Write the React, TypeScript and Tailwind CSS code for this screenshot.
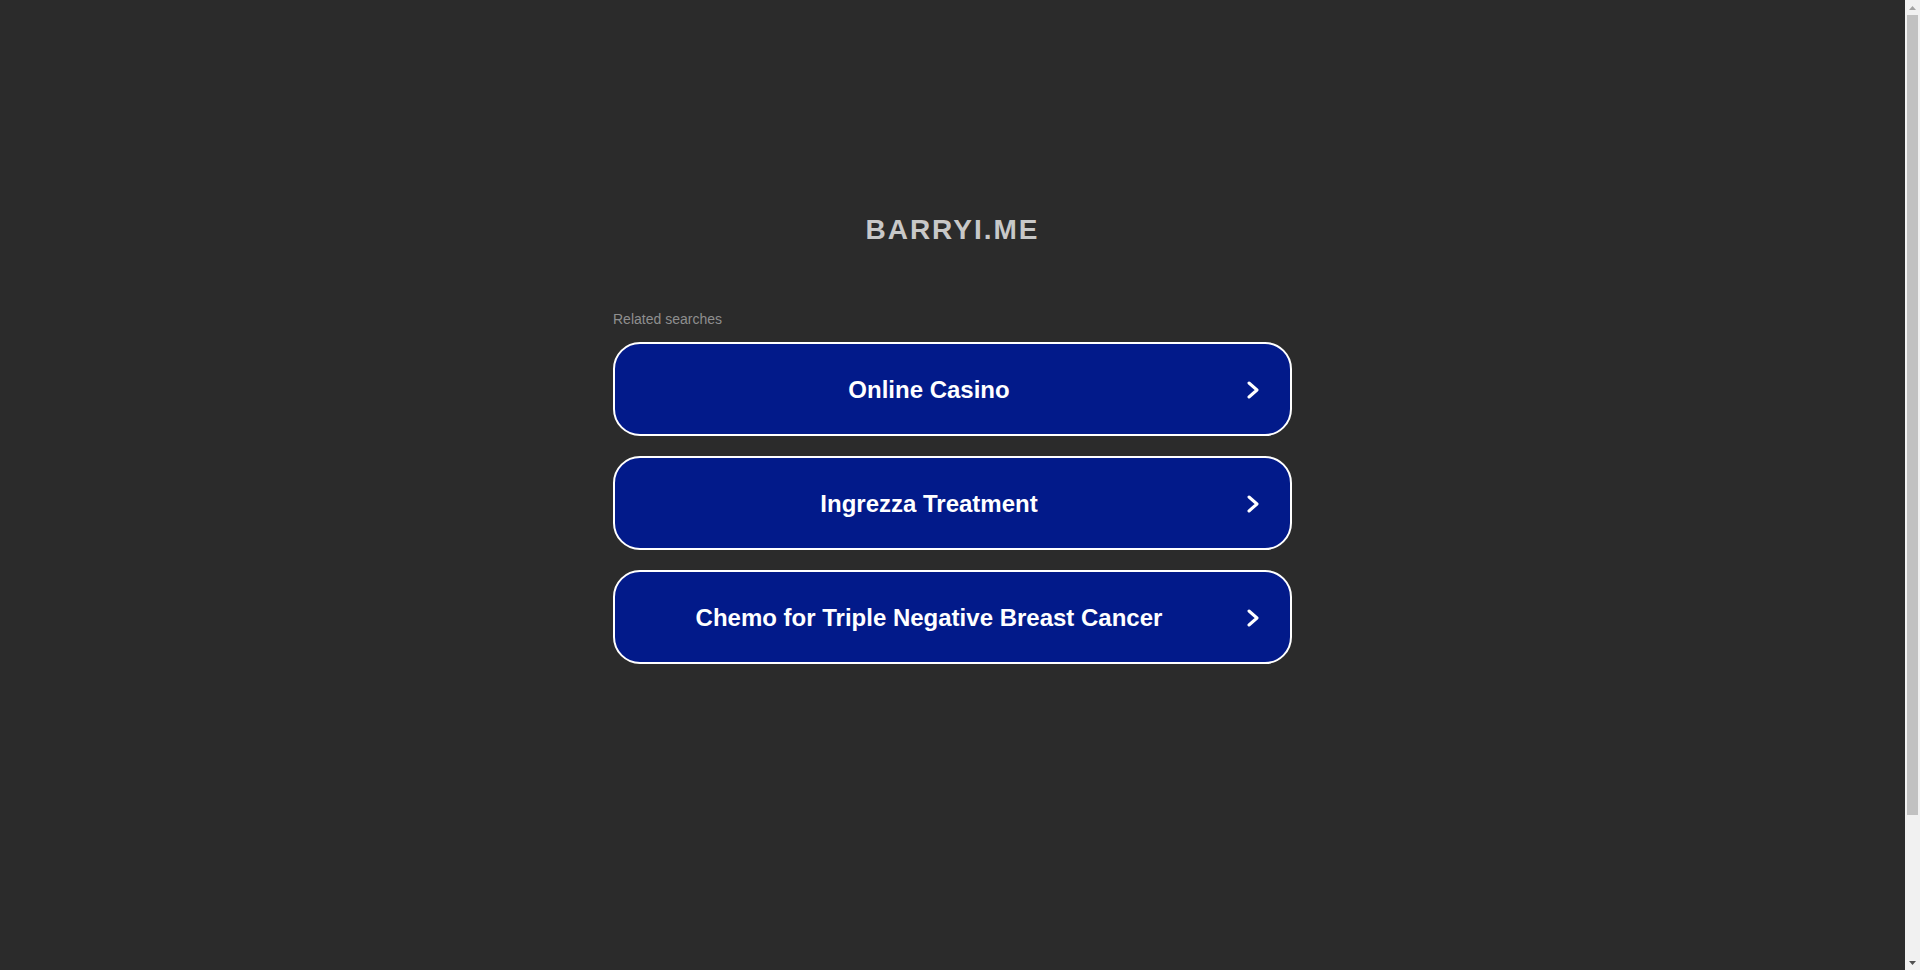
import { useState } from "react";

const searches = [
  "Online Casino",
  "Ingrezza Treatment",
  "Chemo for Triple Negative Breast Cancer",
];

const Chevron = () => (
  <svg width="12" height="18" viewBox="0 0 12 18" fill="none">
    <polyline
      points="2,2 10,9 2,16"
      stroke="#ffffff"
      strokeWidth="3"
      strokeLinecap="round"
      strokeLinejoin="round"
    />
  </svg>
);

// browser scrollbar as seen in the screenshot
const FakeScrollbar = () => (
  <div className="flex h-full w-[15px] shrink-0 flex-col bg-[#f1f1f1]">
    <div className="flex h-[15px] items-center justify-center">
      <svg width="7" height="4" viewBox="0 0 7 4">
        <polygon points="0,4 3.5,0 7,4" fill="#a3a3a3" />
      </svg>
    </div>
    <div className="flex flex-1 flex-col px-[2px]">
      <div className="h-[800px] w-full bg-[#c1c1c1]" />
    </div>
    <div className="flex h-[15px] items-center justify-center">
      <svg width="7" height="4" viewBox="0 0 7 4">
        <polygon points="0,0 7,0 3.5,4" fill="#505050" />
      </svg>
    </div>
  </div>
);

export default function App() {
  const [clicked, setClicked] = useState<string | null>(null);

  return (
    <div
      className="flex h-[970px] w-full overflow-hidden bg-[#2b2b2b] font-['Liberation_Sans',Arial,sans-serif]"
      data-clicked={clicked ?? undefined}
    >
      <div className="flex-1">
        <div className="mx-auto flex w-[679px] flex-col pt-[214px]">
          <h1 className="text-center text-[28px] leading-[32px] font-bold tracking-[2px] text-[#c8c8c8]">
            BARRYI.ME
          </h1>

          <p className="mt-[65px] text-[14px] leading-[16px] text-[#8f8f8f]">
            Related searches
          </p>

          {/* Related search buttons */}
          <div className="mt-[15px] flex flex-col gap-[20px]">
            {searches.map((s) => (
              <button
                key={s}
                onClick={() => setClicked(s)}
                className="flex h-[94px] w-full items-center rounded-[27px] border-2 border-white bg-[#021a8a] pt-[2px] text-white"
              >
                <span className="flex-1 text-center text-[24px] leading-[28px] font-bold">
                  {s}
                </span>
                <span className="flex w-[47px] justify-start pl-[4px]">
                  <Chevron />
                </span>
              </button>
            ))}
          </div>
        </div>
      </div>
      <FakeScrollbar />
    </div>
  );
}
